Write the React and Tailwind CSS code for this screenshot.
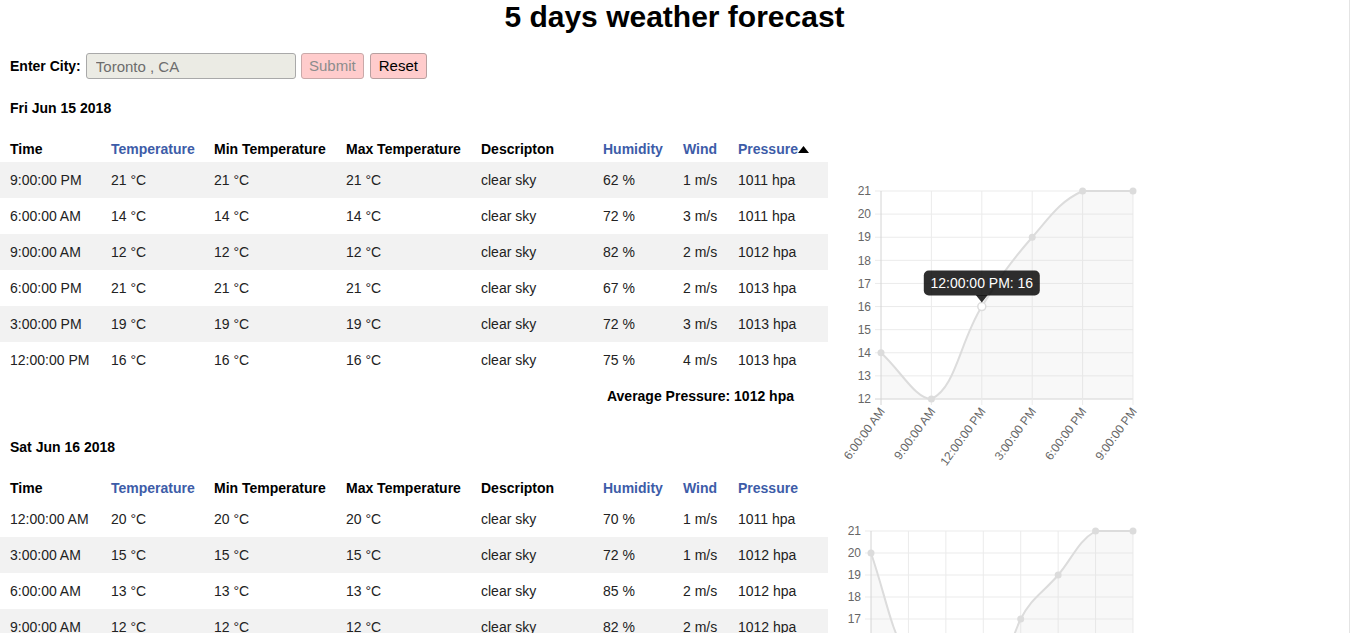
import React from 'react';

const cols = [
  { label: 'Time', w: 101 },
  { label: 'Temperature', w: 103, link: true },
  { label: 'Min Temperature', w: 132 },
  { label: 'Max Temperature', w: 135 },
  { label: 'Descripton', w: 122 },
  { label: 'Humidity', w: 80, link: true },
  { label: 'Wind', w: 55, link: true },
  { label: 'Pressure', w: 100, link: true },
];

const days = [
  {
    date: 'Fri Jun 15 2018',
    sorted: true,
    stripeFirst: true,
    avg: 'Average Pressure: 1012 hpa',
    rows: [
      ['9:00:00 PM', 21, 62, 1, 1011],
      ['6:00:00 AM', 14, 72, 3, 1011],
      ['9:00:00 AM', 12, 82, 2, 1012],
      ['6:00:00 PM', 21, 67, 2, 1013],
      ['3:00:00 PM', 19, 72, 3, 1013],
      ['12:00:00 PM', 16, 75, 4, 1013],
    ],
    chart: {
      labels: ['6:00:00 AM', '9:00:00 AM', '12:00:00 PM', '3:00:00 PM', '6:00:00 PM', '9:00:00 PM'],
      values: [14, 12, 16, 19, 21, 21],
      left: 43,
      bottom: 223,
      tooltip: 2,
    },
  },
  {
    date: 'Sat Jun 16 2018',
    stripeFirst: false,
    rows: [
      ['12:00:00 AM', 20, 70, 1, 1011],
      ['3:00:00 AM', 15, 72, 1, 1012],
      ['6:00:00 AM', 13, 85, 2, 1012],
      ['9:00:00 AM', 12, 82, 2, 1012],
      ['12:00:00 PM', 17, 64, 3, 1012],
      ['3:00:00 PM', 19, 58, 3, 1011],
      ['6:00:00 PM', 21, 55, 2, 1011],
      ['9:00:00 PM', 21, 60, 2, 1011],
    ],
    chart: {
      labels: ['12:00:00 AM', '3:00:00 AM', '6:00:00 AM', '9:00:00 AM', '12:00:00 PM', '3:00:00 PM', '6:00:00 PM', '9:00:00 PM'],
      values: [20, 15, 13, 12, 17, 19, 21, 21],
      left: 33,
      bottom: 213,
    },
  },
];

// same spline maths as chart.js (tension 0.4), capped to the plot area
function splinePath(pts, top, bottom) {
  const t = 0.4;
  const cps = pts.map((cur, i) => {
    const prev = pts[i - 1] || cur;
    const next = pts[i + 1] || cur;
    const d01 = Math.hypot(cur.x - prev.x, cur.y - prev.y);
    const d12 = Math.hypot(next.x - cur.x, next.y - cur.y);
    let s01 = d01 / (d01 + d12);
    let s12 = d12 / (d01 + d12);
    if (isNaN(s01)) s01 = 0;
    if (isNaN(s12)) s12 = 0;
    const fa = t * s01;
    const fb = t * s12;
    const cap = (y) => Math.min(bottom, Math.max(top, y));
    return {
      inX: cur.x - fa * (next.x - prev.x),
      inY: cap(cur.y - fa * (next.y - prev.y)),
      outX: cur.x + fb * (next.x - prev.x),
      outY: cap(cur.y + fb * (next.y - prev.y)),
    };
  });
  let d = `M${pts[0].x},${pts[0].y}`;
  for (let i = 1; i < pts.length; i++) {
    d += ` C${cps[i - 1].outX},${cps[i - 1].outY} ${cps[i].inX},${cps[i].inY} ${pts[i].x},${pts[i].y}`;
  }
  return d;
}

function Chart({ labels, values, left, bottom, tooltip }) {
  const top = 15;
  const right = 295;
  const min = 12;
  const max = 21;
  const step = (bottom - top) / (max - min);
  const pts = values.map((v, i) => ({
    x: left + (i * (right - left)) / (labels.length - 1),
    y: top + (max - v) * step,
  }));
  const line = splinePath(pts, top, bottom);
  const area = `${line} L${pts[pts.length - 1].x},${bottom} L${pts[0].x},${bottom} Z`;
  const ticks = [];
  for (let v = max; v >= min; v--) ticks.push(v);
  const tip = tooltip !== undefined ? pts[tooltip] : null;

  return (
    <svg width="312" height="230" className="overflow-visible shrink-0 ml-[10px]" style={{ overflow: 'visible' }}>
      {ticks.map((v) => {
        const y = top + (max - v) * step;
        return (
          <g key={v}>
            <line x1={left - 6} x2={right} y1={y} y2={y} stroke={v === min ? '#d4d4d4' : '#ebebeb'} strokeWidth="1" />
            <text x={left - 10} y={y} dy="0.35em" textAnchor="end" fontSize="12" fill="#666" fontFamily="Liberation Sans, Arial, sans-serif">
              {v}
            </text>
          </g>
        );
      })}
      {pts.map((p, i) => (
        <g key={i}>
          <line x1={p.x} x2={p.x} y1={top} y2={bottom + 6} stroke={i === 0 ? '#d4d4d4' : '#ebebeb'} strokeWidth="1" />
          <text
            x={p.x + 1}
            y={bottom + 10}
            dy="0.35em"
            textAnchor="end"
            fontSize="12"
            fill="#666"
            fontFamily="Liberation Sans, Arial, sans-serif"
            transform={`rotate(-54 ${p.x + 1} ${bottom + 10})`}
          >
            {labels[i]}
          </text>
        </g>
      ))}
      <path d={area} fill="rgba(220,220,220,0.2)" />
      <path d={line} fill="none" stroke="#dcdcdc" strokeWidth="2" />
      {pts.map((p, i) =>
        i === tooltip ? (
          <circle key={i} cx={p.x} cy={p.y} r="4" fill="#fff" stroke="#dcdcdc" strokeWidth="1.5" />
        ) : (
          <circle key={i} cx={p.x} cy={p.y} r="3.5" fill="#dcdcdc" />
        )
      )}
      {tip && (
        <g>
          <rect x={tip.x - 58} y={tip.y - 36} width="116" height="25" rx="5" fill="rgba(0,0,0,0.82)" />
          <path d={`M${tip.x - 6},${tip.y - 11.5} L${tip.x + 6},${tip.y - 11.5} L${tip.x},${tip.y - 4} Z`} fill="rgba(0,0,0,0.82)" />
          <text x={tip.x} y={tip.y - 23.5} dy="0.35em" textAnchor="middle" fontSize="14" fill="#fff" fontFamily="Liberation Sans, Arial, sans-serif">
            {`${labels[tooltip]}: ${values[tooltip]}`}
          </text>
        </g>
      )}
    </svg>
  );
}

function DayTable({ day }) {
  return (
    <section className="flex items-start mb-[25px]">
      <div className="w-[828px] shrink-0">
        <div className="pl-[10px] font-bold leading-[16px] text-black">{day.date}</div>
        <table className="mt-[20px] w-[828px] table-fixed border-collapse">
          <colgroup>
            {cols.map((c) => (
              <col key={c.label} style={{ width: c.w }} />
            ))}
          </colgroup>
          <thead>
            <tr className="h-[26px]">
              {cols.map((c) => (
                <th
                  key={c.label}
                  className={`pl-[10px] text-left font-bold align-middle whitespace-nowrap ${c.link ? 'text-[#3d5ca8]' : 'text-black'}`}
                >
                  {c.label}
                  {c.label === 'Pressure' && day.sorted && (
                    <svg width="11" height="7" className="inline-block align-[1px]">
                      <path d="M5.5,0 L11,7 L0,7 Z" fill="#000" />
                    </svg>
                  )}
                </th>
              ))}
            </tr>
          </thead>
          <tbody>
            {day.rows.map((r, i) => {
              const gray = day.stripeFirst ? i % 2 === 0 : i % 2 === 1;
              return (
                <tr key={i} className={`h-[36px] ${gray ? 'bg-[#f2f2f2]' : 'bg-white'}`}>
                  <td className="pl-[10px] whitespace-nowrap">{r[0]}</td>
                  <td className="pl-[10px]">{r[1]} °C</td>
                  <td className="pl-[10px]">{r[1]} °C</td>
                  <td className="pl-[10px]">{r[1]} °C</td>
                  <td className="pl-[10px]">clear sky</td>
                  <td className="pl-[10px]">{r[2]} %</td>
                  <td className="pl-[10px]">{r[3]} m/s</td>
                  <td className="pl-[10px]">{r[4]} hpa</td>
                </tr>
              );
            })}
          </tbody>
        </table>
        {day.avg && (
          <div className="h-[36px] flex items-center justify-end pr-[34px] font-bold text-black">{day.avg}</div>
        )}
      </div>
      <div className={day.sorted ? 'mt-[76px]' : 'mt-[77px]'}>
        <Chart {...day.chart} />
      </div>
    </section>
  );
}

export default function App() {
  return (
    <div className="min-h-screen bg-white border-r border-[#e4e4e4] font-['Liberation_Sans',Arial,sans-serif] text-[14px] text-[#222]">
      <h1 className="text-[30px] leading-[34px] font-bold text-center text-black">5 days weather forecast</h1>

      <form className="flex items-center mt-[19px] pl-[10px] h-[26px]">
        <label className="font-bold text-black mr-[5px]">Enter City:</label>
        <input
          readOnly
          disabled
          value="Toronto , CA"
          className="w-[210px] h-[26px] px-[9px] bg-[#ebebe4] border border-[#a9a9a9] rounded-[3px] text-[15px] text-[#6d6d6d]"
        />
        <button
          type="button"
          disabled
          className="ml-[5px] w-[63px] h-[26px] bg-[#ffcccc] border border-[#c9a9a9] rounded-[3px] text-[15px] text-[#8c8c8c]"
        >
          Submit
        </button>
        <button
          type="button"
          className="ml-[6px] w-[57px] h-[26px] bg-[#ffcccc] border border-[#b8a0a0] rounded-[3px] text-[15px] text-black"
        >
          Reset
        </button>
      </form>

      <div className="mt-[21px]">
        {days.map((d) => (
          <DayTable key={d.date} day={d} />
        ))}
      </div>
    </div>
  );
}
